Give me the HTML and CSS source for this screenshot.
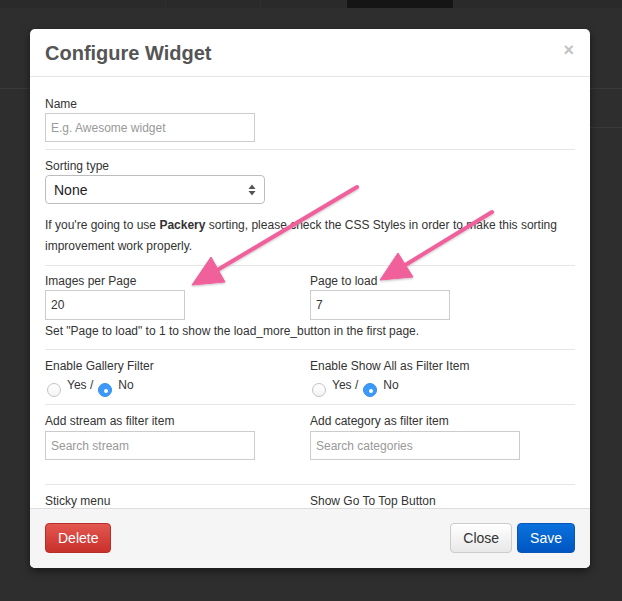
FILE: index.html
```html
<!DOCTYPE html>
<html>
<head>
<meta charset="utf-8">
<link rel="stylesheet" href="styles.css">
</head>
<body>
<div class="page">
  <div class="topbar">
    <div class="tb-seg tb-a"></div>
    <div class="tb-seg tb-b"></div>
    <div class="tb-seg tb-c"></div>
    <div class="tb-seg tb-active"></div>
    <div class="tb-seg tb-d"></div>
  </div>
  <div class="bg-line line-1"></div>
  <div class="bg-line line-2"></div>
</div>

<div class="modal">
  <div class="modal-header">
    <h4 class="modal-title">Configure Widget</h4>
    <span class="close">×</span>
  </div>
  <div class="modal-body">
    <label class="lbl">Name</label>
    <input class="inp w210" type="text" placeholder="E.g. Awesome widget">
    <div class="hr"></div>

    <label class="lbl">Sorting type</label>
    <div class="select">
      <span>None</span>
      <svg class="sel-arrows" width="8" height="12" viewBox="0 0 8 12"><path d="M4 0.5 L7.5 5 L0.5 5 Z M4 11.5 L7.5 7 L0.5 7 Z" fill="#555"/></svg>
    </div>
    <p class="note">If you're going to use <b>Packery</b> sorting, please check the CSS Styles in order to make this sorting improvement work properly.</p>
    <div class="hr hr-a"></div>

    <div class="row">
      <div class="col">
        <label class="lbl">Images per Page</label>
        <input class="inp w140 h30" type="text" value="20">
      </div>
      <div class="col">
        <label class="lbl">Page to load</label>
        <input class="inp w140 h30" type="text" value="7">
      </div>
    </div>
    <p class="help">Set "Page to load" to 1 to show the load_more_button in the first page.</p>
    <div class="hr hr-b"></div>

    <div class="row">
      <div class="col">
        <label class="lbl">Enable Gallery Filter</label>
        <div class="radios">
          <span class="radio"></span><span class="rtxt">Yes /</span>
          <span class="radio on"></span><span class="rtxt">No</span>
        </div>
      </div>
      <div class="col">
        <label class="lbl">Enable Show All as Filter Item</label>
        <div class="radios">
          <span class="radio"></span><span class="rtxt">Yes /</span>
          <span class="radio on"></span><span class="rtxt">No</span>
        </div>
      </div>
    </div>
    <div class="hr hr-c"></div>

    <div class="row">
      <div class="col">
        <label class="lbl">Add stream as filter item</label>
        <input class="inp w210 mt1" type="text" placeholder="Search stream">
      </div>
      <div class="col">
        <label class="lbl">Add category as filter item</label>
        <input class="inp w210 mt1" type="text" placeholder="Search categories">
      </div>
    </div>
    <div class="hr hr-d"></div>

    <div class="row">
      <div class="col"><label class="lbl">Sticky menu</label></div>
      <div class="col"><label class="lbl">Show Go To Top Button</label></div>
    </div>
  </div>
  <div class="modal-footer">
    <button class="btn btn-danger">Delete</button>
    <div class="right-btns">
      <button class="btn btn-default">Close</button>
      <button class="btn btn-primary">Save</button>
    </div>
  </div>
</div>

<svg class="arrows" width="622" height="601" viewBox="0 0 622 601">
  <defs>
    <filter id="sh" x="-10%" y="-10%" width="120%" height="120%">
      <feDropShadow dx="0" dy="1" stdDeviation="1" flood-color="#000" flood-opacity="0.25"/>
    </filter>
  </defs>
  <g fill="#f0609b" stroke="#f0609b" filter="url(#sh)">
    <line x1="357" y1="187" x2="214" y2="272" stroke-width="4" stroke-linecap="round"/>
    <polygon points="192,285 225,282 211,257" stroke-width="1" stroke-linejoin="round"/>
    <line x1="492" y1="212" x2="402" y2="267" stroke-width="4" stroke-linecap="round"/>
    <polygon points="380,280 413,277 398,253" stroke-width="1" stroke-linejoin="round"/>
  </g>
</svg>
</body>
</html>
```

FILE: styles.css
```css
* { box-sizing: border-box; }
html, body {
  margin: 0;
  padding: 0;
  width: 622px;
  height: 601px;
  overflow: hidden;
  background: #2e2e2e;
  font-family: "Liberation Sans", Arial, sans-serif;
}
.page {
  position: relative;
  height: 601px;
}
.topbar {
  display: flex;
  height: 8px;
  background: #2a2a2a;
}
.tb-seg { height: 8px; }
.tb-a { width: 166px; border-right: 1px solid #303030; }
.tb-b { width: 95px; border-right: 1px solid #303030; }
.tb-c { width: 86px; }
.tb-active { width: 106px; background: #151515; }
.tb-d { flex: 1; }
.bg-line {
  height: 1px;
  background: #3a3a3a;
}
.line-1 { margin-top: 80px; }
.line-2 { margin-top: 38px; margin-left: 580px; }

.modal {
  position: absolute;
  left: 30px;
  top: 29px;
  width: 560px;
  height: 539px;
  background: #fff;
  border-radius: 5px;
  box-shadow: 0 3px 9px rgba(0,0,0,0.5);
  display: flex;
  flex-direction: column;
  overflow: hidden;
}
.modal-header {
  height: 48px;
  flex: none;
  border-bottom: 1px solid #e5e5e5;
  display: flex;
  align-items: center;
  justify-content: space-between;
  padding: 0 16px 0 15px;
}
.modal-title {
  margin: 0;
  font-size: 20px;
  font-weight: bold;
  color: #555;
  line-height: 26px;
}
.close {
  font-size: 18px;
  font-weight: bold;
  color: #c2c2c2;
  line-height: 18px;
  margin-top: -6px;
}
.modal-body {
  flex: none;
  height: 431px;
  padding: 16px 15px 0;
  overflow: hidden;
  font-size: 12px;
  color: #333;
}
.lbl {
  display: block;
  line-height: 20px;
  height: 20px;
  padding-top: 1px;
  font-size: 12px;
  color: #333;
}
.inp {
  display: block;
  height: 29px;
  border: 1px solid #ccc;
  border-radius: 0;
  padding: 0 5px;
  font-family: "Liberation Sans", Arial, sans-serif;
  font-size: 12px;
  color: #333;
  margin: 0;
  outline: none;
  background: #fff;
}
.inp::placeholder { color: #999; }
.w210 { width: 210px; }
.w140 { width: 140px; }
.h30 { height: 30px; }
.mt1 { margin-top: 1px; }
.hr {
  border-top: 1px solid #e6e6e6;
  margin: 7px 0 5px;
}
.select {
  width: 220px;
  height: 29px;
  border: 1px solid #bdbdbd;
  border-radius: 4px;
  display: flex;
  align-items: center;
  justify-content: space-between;
  padding: 0 8px 0 8px;
  font-size: 14px;
  color: #222;
  background: #fff;
}
.note {
  margin: 11px 0 0;
  line-height: 21px;
  font-size: 12px;
}
.hr-a { margin: 8px 0 4px; }
.row {
  display: grid;
  grid-template-columns: 265px 265px;
}
.help {
  margin: 1px 0 0;
  line-height: 20px;
  font-size: 12px;
}
.hr-b { margin: 8px 0 5px; }
.radios {
  display: flex;
  align-items: flex-start;
  height: 22px;
  padding-top: 3px;
  padding-left: 2px;
}
.radio {
  width: 14px;
  height: 14px;
  border-radius: 50%;
  border: 1px solid #c4c4c4;
  background: linear-gradient(#fff, #f4f4f4);
  margin-top: 5px;
  flex: none;
  position: relative;
}
.radio.on {
  background: #3b99fc;
  border-color: #3a8ee8;
}
.radio.on::after {
  content: "";
  position: absolute;
  left: 5px;
  top: 5px;
  width: 4px;
  height: 4px;
  border-radius: 50%;
  background: #fff;
}
.rtxt {
  font-size: 12px;
  line-height: 14px;
  margin-left: 6px;
  margin-right: 5px;
}
.hr-c { margin: 7px 0 5px; }
.hr-d { margin: 24px 0 5px; }

.modal-footer {
  flex: none;
  height: 60px;
  border-top: 1px solid #ddd;
  background: #f5f5f5;
  padding: 14px 15px 0;
  display: flex;
  justify-content: space-between;
  align-items: flex-start;
}
.right-btns {
  display: flex;
  gap: 5px;
}
.btn {
  height: 30px;
  padding: 0 12px;
  font-family: "Liberation Sans", Arial, sans-serif;
  font-size: 14px;
  border-radius: 4px;
  border: 1px solid;
  line-height: 28px;
  cursor: pointer;
}
.btn-danger {
  color: #fff;
  background: linear-gradient(#e2574f, #c9302c);
  border-color: #b92c28;
}
.btn-default {
  color: #333;
  background: linear-gradient(#ffffff, #e8e8e8);
  border-color: #ccc;
}
.btn-primary {
  color: #fff;
  background: linear-gradient(#0a72dd, #0055c1);
  border-color: #0a55b5;
}

.arrows {
  position: absolute;
  left: 0;
  top: 0;
  pointer-events: none;
}
```
